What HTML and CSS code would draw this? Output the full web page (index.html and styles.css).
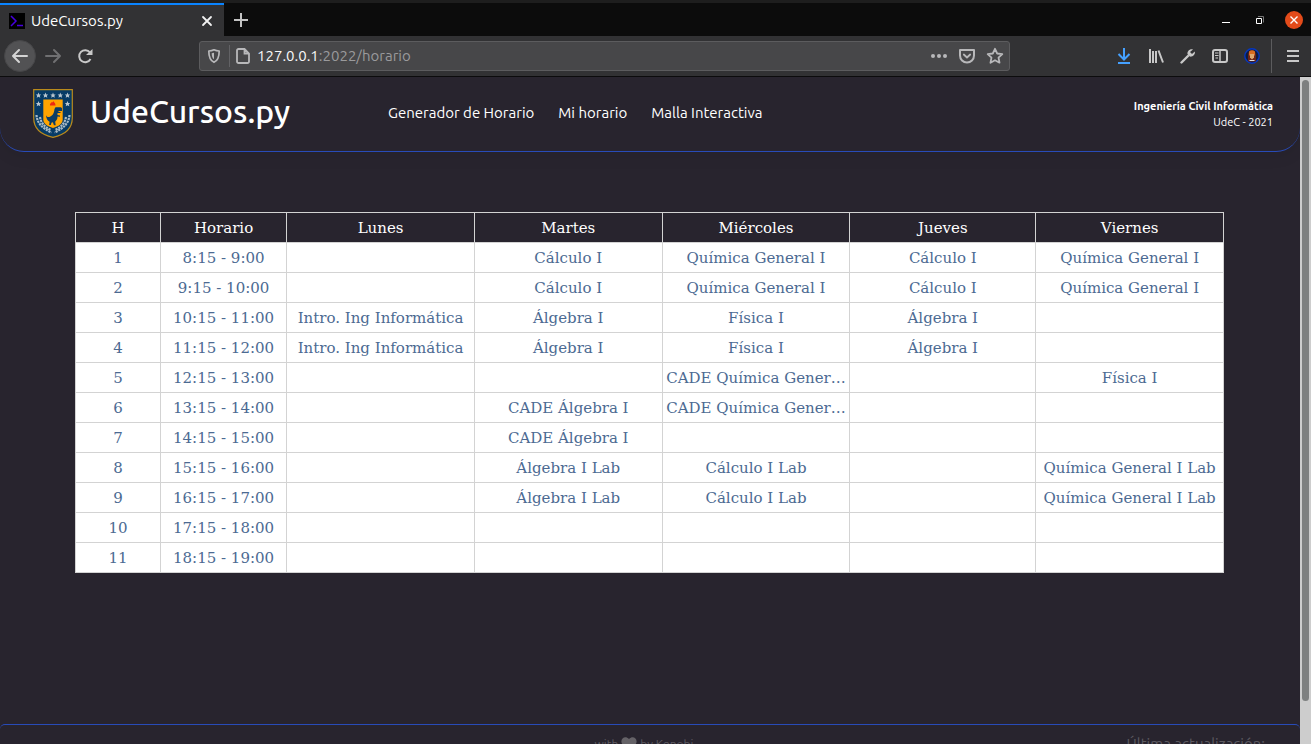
FILE: index.html
```html
<!DOCTYPE html>
<html lang="es">
<head>
<meta charset="utf-8">
<title>UdeCursos.py</title>
<link rel="stylesheet" href="styles.css">
</head>
<body>
<div class="window">
  <div class="tabbar">
    <div class="tab">
      <svg class="favicon" viewBox="0 0 16 16"><rect width="16" height="16" fill="#000"/><path d="M2 3l5 5-5 5M8 12.500h6" fill="none" stroke="#4800e0" stroke-width="1.500"/></svg>
      <span class="tab-title">UdeCursos.py</span>
      <button class="icon-btn tab-close" aria-label="Cerrar pestaña"><svg width="16" height="16" viewBox="0 0 16 16"><path d="M4 4l8 8M12 4l-8 8" stroke="#f2f2f2" stroke-width="1.800" stroke-linecap="round"/></svg></button>
    </div>
    <button class="icon-btn new-tab" aria-label="Nueva pestaña"><svg width="16" height="16" viewBox="0 0 16 16"><path d="M8 1v14M1 8h14" stroke="#c4c4c4" stroke-width="2"/></svg></button>
    <div class="win-controls">
      <button class="icon-btn" aria-label="Minimizar"><svg width="18" height="18" viewBox="0 0 18 18"><path d="M5 11.500h8" stroke="#fff"/></svg></button>
      <button class="icon-btn" aria-label="Restaurar"><svg width="18" height="18" viewBox="0 0 18 18"><path d="M5.500 7.500h5v5h-5z" fill="none" stroke="#fff"/><path d="M7 5.500h5.500v6" fill="none" stroke="#777"/></svg></button>
      <button class="icon-btn" aria-label="Cerrar"><svg width="18" height="18" viewBox="0 0 18 18"><circle cx="9" cy="9" r="9" fill="#e34b1a"/><path d="M5.500 5.500l7 7M12.500 5.500l-7 7" stroke="#fff" stroke-width="1.400"/></svg></button>
    </div>
  </div>

  <div class="toolbar">
    <div class="nav-buttons">
      <button class="icon-btn back" aria-label="Atrás"><svg width="18" height="18" viewBox="0 0 18 18"><path d="M16 9H2M8 3L2 9l6 6" fill="none" stroke="#d4d4d4" stroke-width="2" stroke-linecap="round" stroke-linejoin="round"/></svg></button>
      <button class="icon-btn" aria-label="Adelante"><svg width="18" height="18" viewBox="0 0 18 18"><path d="M2 9h14M10 3l6 6-6 6" fill="none" stroke="#707072" stroke-width="2" stroke-linecap="round" stroke-linejoin="round"/></svg></button>
      <button class="icon-btn" aria-label="Recargar"><svg width="18" height="18" viewBox="0 0 18 18"><path d="M14 5.500A6 6 0 1 0 14.500 12" fill="none" stroke="#c8c8c8" stroke-width="2"/><path d="M16.500 2v6h-6.500z" fill="#c8c8c8"/></svg></button>
    </div>
    <div class="urlbar">
      <svg width="16" height="16" viewBox="0 0 16 16"><path d="M8 1.800c2 1 3.500 1.200 5.200 1.200 0 6-1 9.500-5.200 11.300C3.800 12.500 2.800 9 2.800 3 4.500 3 6 2.800 8 1.800z" fill="none" stroke="#b8b8ba" stroke-width="1.700" stroke-linejoin="round"/><path d="M8 4.800v6.500C6.200 10 5.800 8 5.700 5.200z" fill="#b8b8ba"/></svg>
      <span class="url-sep"></span>
      <svg width="16" height="16" viewBox="0 0 16 16"><path d="M3.500 1h6L14 5.500v8a1.500 1.500 0 0 1-1.500 1.500h-9A1.500 1.500 0 0 1 2 13.500v-11A1.500 1.500 0 0 1 3.500 1zM9.500 1.500v4h4" fill="none" stroke="#b8b8ba" stroke-width="1.800"/></svg>
      <div class="url"><span class="host">127.0.0.1</span>:2022/horario</div>
      <svg width="18" height="18" viewBox="0 0 18 18" fill="#b8b8ba"><circle cx="3" cy="9" r="2"/><circle cx="9" cy="9" r="2"/><circle cx="15" cy="9" r="2"/></svg>
      <svg width="18" height="18" viewBox="0 0 18 18" fill="none" stroke="#b8b8ba" stroke-width="2" stroke-linejoin="round" stroke-linecap="round"><path d="M2 3h14v5.500a7 7 0 0 1-14 0z"/><path d="M5.800 7.500L9 10.500l3.200-3" stroke-width="1.800"/></svg>
      <svg width="18" height="18" viewBox="0 0 18 18"><path d="M9 1.800l2.200 4.700 5.100.6-3.800 3.500 1 5.100L9 13.200l-4.500 2.500 1-5.100L1.700 7.100l5.100-.6z" fill="none" stroke="#b8b8ba" stroke-width="1.800" stroke-linejoin="round"/></svg>
    </div>
    <div class="tools">
      <button class="icon-btn" aria-label="Descargas"><svg width="16" height="18" viewBox="0 0 16 18"><path d="M8 1v11M2.500 7L8 12.500 13.500 7M2 16h12" fill="none" stroke="#45a1ff" stroke-width="2"/></svg></button>
      <button class="icon-btn" aria-label="Catálogo"><svg width="16" height="16" viewBox="0 0 16 16"><path d="M2 1v14M5 3v12M8 3v12M10.500 2.500L15 14.500" stroke="#c8c8c8" stroke-width="2"/></svg></button>
      <button class="icon-btn" aria-label="Herramientas"><svg width="16" height="16" viewBox="0 0 16 16"><path d="M1.500 14.500L8 8" stroke="#c8c8c8" stroke-width="2.400" stroke-linecap="round"/><path d="M13 1.500C10 .5 7 3 7.500 6.200l2.300 2.400C13 9 15.500 6.500 14.800 3.500L12 6l-2-2z" fill="#c8c8c8"/></svg></button>
      <button class="icon-btn" aria-label="Barra lateral"><svg width="16" height="16" viewBox="0 0 16 16"><rect x="1" y="2" width="14" height="12" rx="2" fill="none" stroke="#c8c8c8" stroke-width="2"/><path d="M8 2v12" stroke="#c8c8c8" stroke-width="1.500"/><path d="M3 5h3.500M3 7.500h3.500M3.500 10H6" stroke="#c8c8c8"/></svg></button>
      <button class="icon-btn" aria-label="Cuenta"><svg width="16" height="16" viewBox="0 0 16 16"><circle cx="8" cy="8" r="7.200" fill="#101c40" stroke="#0637c0" stroke-width="1.400"/><path d="M4 13.500V8Q4 2.500 8 2.500T12 8v5.500z" fill="#6e2416"/><path d="M5 3.500Q8 1 11 3.500v4H5z" fill="#d86b20"/><path d="M6 6h4v3.500l-2 2-2-2z" fill="#dca66e"/><path d="M5.500 12h5v1h-5z" fill="#ddd"/></svg></button>
      <span class="tools-sep"></span>
      <button class="icon-btn" aria-label="Menú"><svg width="16" height="16" viewBox="0 0 16 16"><path d="M2 3h12M2 8h12M2 13h12" stroke="#c8c8c8" stroke-width="2"/></svg></button>
    </div>
  </div>

  <div class="viewport">
    <div class="page">
      <header class="site-header">
        <svg class="crest" viewBox="0 0 40 49">
          <path d="M.7.700h38.600v28C39.300 40 31 46 20 48.300 9 46 .7 40 .7 28.700z" fill="#063b66" stroke="#b98a1c" stroke-width="1.200"/>
          <path d="M10.300 10.500h19.400v20c0 4-4 7-9.700 8.500-5.700-1.500-9.700-4.500-9.700-8.500z" fill="#ffa400"/>
          <g fill="#b9c6cf">
            <path id="star" d="M5.500 3.600l.8 1.800 1.900.2-1.400 1.200.5 1.900-1.800-1-1.800 1 .5-1.900-1.400-1.200 1.900-.2z"/>
            <use href="#star" x="7"/><use href="#star" x="14.500"/><use href="#star" x="21.800"/><use href="#star" x="29"/>
            <use href="#star" y="8.500"/><use href="#star" x="29" y="8.500"/>
          </g>
          <path d="M17 16.500c-.5-2 1-2 1.500-3.500.5 1 1.500 0 2-1 .2 1.500 2 1.500 2 4.500z" fill="#ee2a10"/>
          <path d="M21.500 20l1-1.700h5.500l1 1v2.700h-3.500v1h2v1h-3v2l2.500.5v1.200l-2.500-.3c0 3-1.200 4-2.300 5.300l.5 3.500h-1.800l-1-3-1.500.5-.5 2.300h-1.800l.5-3.300c-2-1-3.300-3-3.600-6.500 1 2 2.500 2.300 4 1.500 2-1 4-2.500 4.500-7.700z" fill="#0b3d66"/>
          <g fill="none" stroke="#a9bac6" stroke-width="2.200" stroke-dasharray="2.200 .8">
            <path d="M3.500 26c.5 8 5.500 13 15 17.500"/><path d="M36.500 26c-.5 8-5.500 13-15 17.500"/>
            <path d="M7 28c1 6 4.500 10 11 13"/><path d="M33 28c-1 6-4.500 10-11 13"/>
          </g>
        </svg>
        <h1 class="brand">UdeCursos.py</h1>
        <nav class="site-nav">
          <a href="#">Generador de Horario</a>
          <a href="#">Mi horario</a>
          <a href="#">Malla Interactiva</a>
        </nav>
        <div class="credits"><strong>Ingeniería Civil Informática</strong><span>UdeC - 2021</span></div>
      </header>

      <main class="content">
        <table class="schedule">
          <colgroup><col class="col-num"><col class="col-time"><col><col><col><col class="col-thu"><col></colgroup>
          <thead><tr><th>H</th><th>Horario</th><th>Lunes</th><th>Martes</th><th>Miércoles</th><th>Jueves</th><th>Viernes</th></tr></thead>
          <tbody>
            <tr><td>1</td><td>8:15 - 9:00</td><td></td><td>Cálculo I</td><td>Química General I</td><td>Cálculo I</td><td>Química General I</td></tr>
            <tr><td>2</td><td>9:15 - 10:00</td><td></td><td>Cálculo I</td><td>Química General I</td><td>Cálculo I</td><td>Química General I</td></tr>
            <tr><td>3</td><td>10:15 - 11:00</td><td>Intro. Ing Informática</td><td>Álgebra I</td><td>Física I</td><td>Álgebra I</td><td></td></tr>
            <tr><td>4</td><td>11:15 - 12:00</td><td>Intro. Ing Informática</td><td>Álgebra I</td><td>Física I</td><td>Álgebra I</td><td></td></tr>
            <tr><td>5</td><td>12:15 - 13:00</td><td></td><td></td><td>CADE Química Gener…</td><td></td><td>Física I</td></tr>
            <tr><td>6</td><td>13:15 - 14:00</td><td></td><td>CADE Álgebra I</td><td>CADE Química Gener…</td><td></td><td></td></tr>
            <tr><td>7</td><td>14:15 - 15:00</td><td></td><td>CADE Álgebra I</td><td></td><td></td><td></td></tr>
            <tr><td>8</td><td>15:15 - 16:00</td><td></td><td>Álgebra I Lab</td><td>Cálculo I Lab</td><td></td><td>Química General I Lab</td></tr>
            <tr><td>9</td><td>16:15 - 17:00</td><td></td><td>Álgebra I Lab</td><td>Cálculo I Lab</td><td></td><td>Química General I Lab</td></tr>
            <tr><td>10</td><td>17:15 - 18:00</td><td></td><td></td><td></td><td></td><td></td></tr>
            <tr><td>11</td><td>18:15 - 19:00</td><td></td><td></td><td></td><td></td><td></td></tr>
          </tbody>
        </table>
      </main>

      <footer class="site-footer">
        <span></span>
        <span class="made-by">with <svg width="16" height="14" viewBox="0 0 16 14"><path d="M8 14L1.500 7.500C-2 3 3.500-2.500 8 2c4.500-4.500 10 1 6.500 5.500z" fill="#656267"/></svg> by Kenobi</span>
        <span class="updated">Última actualización:</span>
      </footer>
    </div>
    <div class="scrollbar"><div class="thumb"></div></div>
  </div>
</div>
</body>
</html>
```
FILE: styles.css
```css
* { box-sizing: border-box; }

body {
  margin: 0;
  background: #28242e;
  color: #fff;
  font-family: Ubuntu, "Noto Sans", "Open Sans", sans-serif;
}

.window {
  display: flex;
  flex-direction: column;
  height: 100vh;
  overflow: hidden;
}

svg { display: block; flex: none; }

.icon-btn {
  display: flex;
  align-items: center;
  justify-content: center;
  padding: 0;
  border: 0;
  background: none;
}

/* Tab strip */
.tabbar {
  display: flex;
  flex: none;
  height: 36px;
  border-top: 3px solid #1e1e1e;
  background: #0c0c0c;
}

.tab {
  display: flex;
  align-items: center;
  width: 224px;
  padding: 0 9px;
  border-top: 2px solid #0a84ff;
  background: #323234;
}

.favicon { width: 16px; height: 16px; }

.tab-title {
  flex: 1;
  margin-left: 6px;
  font-size: 15px;
  line-height: 20px;
}

.new-tab { margin-left: 9px; }

.win-controls {
  display: flex;
  align-items: center;
  gap: 16px;
  margin-left: auto;
  padding-right: 8px;
}

/* Navigation toolbar */
.toolbar {
  display: flex;
  flex: none;
  align-items: center;
  height: 41px;
  padding: 0 10px 0 4px;
  border-bottom: 1px solid #0c0c0d;
  background: #323234;
}

.nav-buttons {
  display: flex;
  align-items: center;
  gap: 14px;
  width: 195px;
}

.nav-buttons .back {
  width: 32px;
  height: 32px;
  border: 1px solid #464648;
  border-radius: 50%;
  background: #525254;
}

.nav-buttons .back + .icon-btn { margin-left: -6px; }

.urlbar {
  display: flex;
  flex: 1;
  align-items: center;
  gap: 10px;
  max-width: 811px;
  height: 30px;
  padding: 0 5px 0 6px;
  border: 1px solid #5c5c5e;
  border-radius: 3px;
  background: #474749;
}

.url-sep {
  width: 1px;
  height: 22px;
  margin: 0 -5px 0 -3px;
  background: #626265;
}

.url {
  flex: 1;
  margin-left: -4px;
  color: #9a9a9c;
  font-size: 15px;
  line-height: 20px;
}

.url .host { color: #f9f9fa; }

.tools {
  display: flex;
  align-items: center;
  gap: 16px;
  margin-left: auto;
}

.tools-sep {
  width: 1px;
  height: 34px;
  margin: 0 -3px 0 -5px;
  background: #5c5c5e;
}

/* Page area */
.viewport {
  display: flex;
  flex: 1;
  min-height: 0;
}

.page {
  flex: 1;
  min-width: 0;
  overflow: hidden;
}

.scrollbar {
  width: 11px;
  padding: 3px 2px;
  background: #cdcdcd;
}

.thumb {
  width: 7px;
  height: 94%;
  border-radius: 4px;
  background: #7e8080;
}

.site-header {
  display: flex;
  align-items: center;
  height: 75px;
  padding: 0 27px 2px 33px;
  border-bottom: 1px solid #284bb8;
  border-radius: 0 0 24px 24px;
  box-shadow: 0 4px 16px rgba(0, 0, 0, 0.08);
}

.crest { width: 40px; height: 49px; }

.brand {
  width: 298px;
  margin: 0 0 4px 17px;
  font-size: 32px;
  font-weight: 550;
  line-height: 40px;
}

.site-nav {
  display: flex;
  gap: 24px;
  font-size: 15px;
  line-height: 20px;
}

.site-nav a {
  color: #fff;
  text-decoration: none;
}

.credits {
  display: flex;
  flex-direction: column;
  margin-left: auto;
  padding-top: 2px;
  font-size: 11px;
  line-height: 16px;
  text-align: right;
}

.credits strong { font-weight: 600; }

.content {
  min-height: calc(100vh - 172px);
  padding: 60px 76px 0 75px;
}

.schedule {
  width: 100%;
  border-collapse: collapse;
  table-layout: fixed;
  background: #fff;
  color: #4c6a92;
  font-family: "DejaVu Serif", serif;
  font-size: 15px;
  line-height: 20px;
  text-align: center;
}

.col-num { width: 7.4%; }
.col-time { width: 11%; }
.col-thu { width: 16.2%; }

.schedule th,
.schedule td {
  height: 30px;
  padding: 0 2px;
  border: 1px solid #d3d3d3;
  overflow: hidden;
  white-space: nowrap;
}

.schedule th {
  background: #28242e;
  color: #fff;
  font-weight: 400;
}

.site-footer {
  display: grid;
  grid-template-columns: 1fr auto 1fr;
  padding: 9px 35px 20px;
  border-top: 1px solid #284bb8;
  border-radius: 5px 5px 0 0;
  color: #5d5a61;
}

.made-by {
  display: flex;
  align-items: center;
  gap: 3px;
  margin-right: 12px;
  font-size: 12px;
  line-height: 20px;
}

.updated {
  font-size: 15px;
  line-height: 20px;
  text-align: right;
}
```
